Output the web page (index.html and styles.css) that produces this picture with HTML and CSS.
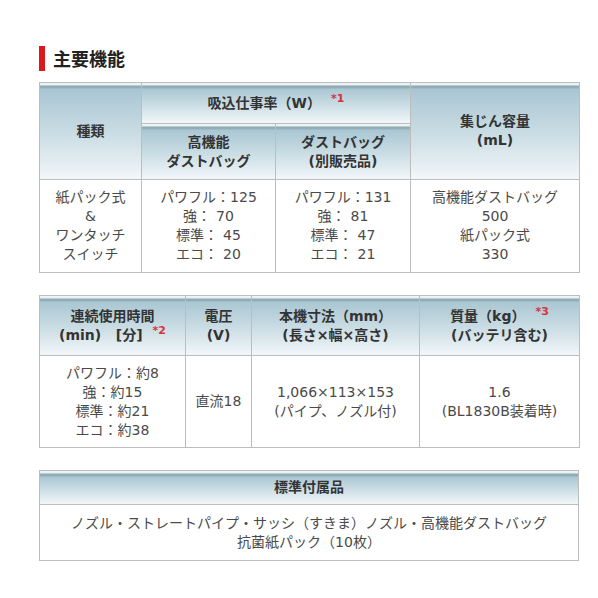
FILE: index.html
```html
<!DOCTYPE html>
<html lang="ja">
<head>
<meta charset="utf-8">
<link rel="stylesheet" href="styles.css">
</head>
<body>
<div class="page">
  <h2 class="heading"><span class="bar"></span>主要機能</h2>

  <table class="spec t1">
    <colgroup><col class="c1a"><col class="c1b"><col class="c1c"><col class="c1d"></colgroup>
    <tr class="h1">
      <th rowspan="2">種類</th>
      <th colspan="2" class="top">吸込仕事率（W）<span class="note">*1</span></th>
      <th rowspan="2">集じん容量<br>(mL)</th>
    </tr>
    <tr class="h2">
      <th>高機能<br>ダストバッグ</th>
      <th>ダストバッグ<br>(別販売品)</th>
    </tr>
    <tr class="b1">
      <td><div>紙パック式</div><div>&amp;</div><div>ワンタッチ</div><div>スイッチ</div></td>
      <td><div>パワフル：125</div><div>強：<span class="sp"></span>70</div><div>標準：<span class="sp"></span>45</div><div>エコ：<span class="sp"></span>20</div></td>
      <td><div>パワフル：131</div><div>強：<span class="sp"></span>81</div><div>標準：<span class="sp"></span>47</div><div>エコ：<span class="sp"></span>21</div></td>
      <td><div>高機能ダストバッグ</div><div>500</div><div>紙パック式</div><div>330</div></td>
    </tr>
  </table>

  <table class="spec t2">
    <colgroup><col class="c2a"><col class="c2b"><col class="c2c"><col class="c2d"></colgroup>
    <tr class="h3">
      <th>連続使用時間<br>(min)&nbsp;&nbsp; [分]<span class="note">*2</span></th>
      <th>電圧<br>(V)</th>
      <th>本機寸法（mm）<br>(長さ×幅×高さ)</th>
      <th>質量（kg）<span class="note">*3</span><br>(バッテリ含む)</th>
    </tr>
    <tr class="b2">
      <td><div>パワフル：約8</div><div>強：約15</div><div>標準：約21</div><div>エコ：約38</div></td>
      <td>直流18</td>
      <td><div>1,066×113×153</div><div>(パイプ、ノズル付)</div></td>
      <td><div>1.6</div><div>(BL1830B装着時)</div></td>
    </tr>
  </table>

  <table class="spec t3">
    <tr class="h4"><th>標準付属品</th></tr>
    <tr class="b3"><td><div>ノズル・ストレートパイプ・サッシ（すきま）ノズル・高機能ダストバッグ</div><div>抗菌紙パック（10枚）</div></td></tr>
  </table>
</div>
</body>
</html>
```

FILE: styles.css
```css
html, body {
  margin: 0;
  padding: 0;
  background: #ffffff;
}

.page {
  width: 540px;
  padding: 46px 0 0 39px;
  font-family: "DejaVu Sans", "Noto Sans CJK JP", sans-serif;
  color: #444;
}

.heading {
  display: flex;
  align-items: center;
  gap: 8px;
  margin: 0 0 11px 0;
  height: 25px;
  font-family: "Noto Sans CJK JP", sans-serif;
  font-size: 18px;
  font-weight: bold;
  color: #222;
  line-height: 25px;
}

.bar {
  display: block;
  width: 6px;
  height: 25px;
  background: #d9191c;
}

.spec {
  width: 540px;
  border-collapse: collapse;
  table-layout: fixed;
  font-size: 14px;
  line-height: 19px;
  margin-bottom: 22px;
}

.spec th,
.spec td {
  border: 1px solid #bdbdbd;
  text-align: center;
  vertical-align: middle;
  padding: 0;
}

.spec td div {
  text-align: center;
  white-space: nowrap;
}

.sp {
  display: inline-block;
  width: 5px;
}

.spec th {
  font-weight: bold;
  color: #333;
  background: linear-gradient(to bottom,
    #e9f1f4 0px, #e9f1f4 2px,
    #8ea8b1 2px, #95b1bb 5px,
    #a9c6d2 5px, #c8dbe3 50%, #f3f7f9 100%);
}

.spec td {
  color: #4a4a4a;
  background: #fff;
}

.note {
  color: #d8333a;
  font-size: 11px;
  font-weight: bold;
  vertical-align: 6px;
  margin-left: 10px;
  line-height: 0;
}

.c1a { width: 102px; }
.c1b { width: 134px; }
.c1c { width: 135px; }
.c1d { width: 169px; }

.c2a { width: 146px; }
.c2b { width: 66px; }
.c2c { width: 168px; }
.c2d { width: 160px; }

.h1 { height: 41px; }
.h2 { height: 56px; }
.b1 { height: 93px; }
.h3 { height: 60px; }
.b2 { height: 92px; }
.h4 { height: 34px; }
.b3 { height: 56px; }

.t1 .top { padding-top: 1px; }
```
